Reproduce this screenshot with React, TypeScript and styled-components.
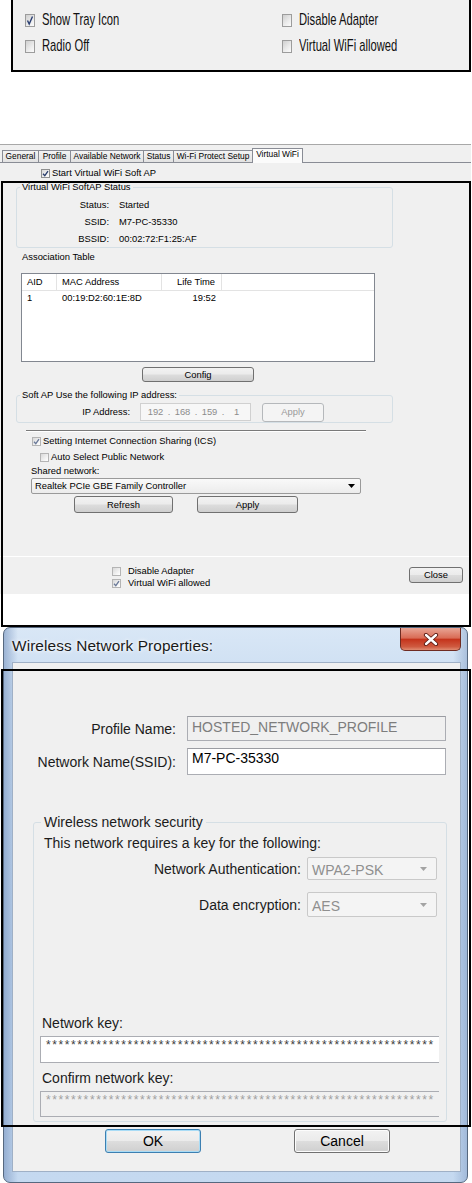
import React from "react";
import styled, { createGlobalStyle } from "styled-components";

const GlobalStyle = createGlobalStyle`
  html, body { margin: 0; padding: 0; background: #ffffff; }
  body { font-family: "Liberation Sans", Arial, sans-serif; color: #000; }
  #root { width: 472px; height: 1183px; overflow: hidden; }
  *, *::before, *::after { box-sizing: border-box; }
`;

const Page = styled.div`
  width: 472px;
  height: 1183px;
  display: flex;
  flex-direction: column;
  background: #fff;
  overflow: hidden;
`;

/* ---------- Section 1 : tray options ---------- */
const TrayPanel = styled.div`
  flex: none;
  margin-left: 11px;
  width: 460px;
  height: 72px;
  border: 2px solid #000;
  border-top: none;
  background: #f0f0f0;
  padding: 7px 0 0 12px;
  display: grid;
  grid-template-columns: 257px 1fr;
  grid-auto-rows: 26px;
`;
const TrayOption = styled.div`
  display: flex;
  align-items: center;
`;
const TrayBox = styled.span`
  flex: none;
  width: 10px;
  height: 13px;
  border: 1px solid #9c9c9c;
  background: linear-gradient(135deg, #cfcfcf 0%, #ececec 60%, #fbfbfb 100%);
  display: flex;
  align-items: center;
  justify-content: center;
`;
const TrayLabel = styled.span`
  margin-left: 7px;
  font-size: 17px;
  line-height: 20px;
  white-space: nowrap;
  color: #111;
  transform: scaleX(0.66);
  transform-origin: left center;
`;

/* ---------- Section 2 : utility dialog ---------- */
const DialogSection = styled.section`
  position: relative;
  flex: none;
  margin-top: 72px;
  height: 483px;
`;
const Dialog = styled.div`
  width: 471px;
  height: 450px;
  display: flex;
  flex-direction: column;
  background: #f0f0f0;
  border-top: 1px solid #a8a8a8;
  font-size: 9.4px;
  line-height: 12px;
`;
const TabStrip = styled.div`
  flex: none;
  height: 17px;
  display: flex;
  align-items: flex-end;
  padding-left: 2px;
`;
const Tab = styled.div<{ $w: number; $active?: boolean; $first?: boolean }>`
  position: relative;
  z-index: ${(p) => (p.$active ? 2 : 1)};
  width: ${(p) => p.$w}px;
  height: ${(p) => (p.$active ? 15 : 12)}px;
  margin-left: ${(p) => (p.$first ? 0 : -1)}px;
  margin-bottom: ${(p) => (p.$active ? -1 : 0)}px;
  border: 1px solid #898c95;
  border-bottom: none;
  background: ${(p) => (p.$active ? "#fbfbfb" : "linear-gradient(#f3f3f3, #e2e2e2)")};
  font-size: 8.4px;
  line-height: 11px;
  text-align: center;
  white-space: nowrap;
`;
const TabPage = styled.div`
  flex: none;
  height: 394px;
  border-top: 1px solid #898c95;
  display: flex;
  flex-direction: column;
`;
const CheckRow = styled.div<{ $left: number; $top: number }>`
  display: flex;
  align-items: center;
  height: 12px;
  margin-top: ${(p) => p.$top}px;
  padding-left: ${(p) => p.$left}px;
  white-space: nowrap;
`;
const SmallBox = styled.span<{ $disabled?: boolean }>`
  flex: none;
  width: 9px;
  height: 9px;
  margin-right: 2px;
  border: 1px solid ${(p) => (p.$disabled ? "#b4b4b4" : "#8e8f8f")};
  background: linear-gradient(135deg, #d9d9d9 0%, #f1f1f1 60%, #ffffff 100%);
  display: flex;
  align-items: center;
  justify-content: center;
`;
const BottomText = styled.span`
  margin-left: 5px;
`;
const GroupBox = styled.fieldset<{ $top: number; $pb: number }>`
  margin: ${(p) => p.$top}px 0 0 16px;
  width: 377px;
  padding: 0 0 ${(p) => p.$pb}px 0;
  border: 1px solid #d5dfe5;
  border-radius: 3px;
  min-width: 0;
`;
const GroupLegend = styled.legend`
  margin-left: 3px;
  padding: 0 2px;
  font-size: 9.4px;
  line-height: 10px;
  white-space: nowrap;
`;
const StatusGrid = styled.div`
  padding-top: 4px;
  display: grid;
  grid-template-columns: 92px 1fr;
  column-gap: 10px;
  grid-auto-rows: 17px;
  align-items: center;
`;
const StatusKey = styled.span`
  text-align: right;
`;
const PlainLabel = styled.div<{ $left: number; $top: number }>`
  margin: ${(p) => p.$top}px 0 0 ${(p) => p.$left}px;
  height: 12px;
  white-space: nowrap;
`;
const AssocTable = styled.div`
  margin: 10px 0 0 21px;
  width: 354px;
  height: 89px;
  border: 1px solid #828790;
  background: #fff;
`;
const TableRow = styled.div<{ $head?: boolean }>`
  display: grid;
  grid-template-columns: 35px 105px 60px;
  height: ${(p) => (p.$head ? 17 : 14)}px;
  align-items: center;
  border-bottom: ${(p) => (p.$head ? "1px solid #e3e3e3" : "none")};
`;
const Cell = styled.span<{ $right?: boolean; $divider?: boolean }>`
  height: 100%;
  display: flex;
  align-items: center;
  justify-content: ${(p) => (p.$right ? "flex-end" : "flex-start")};
  padding: 0 6px 0 5px;
  border-right: ${(p) => (p.$divider ? "1px solid #e3e3e3" : "none")};
  white-space: nowrap;
`;
const ClassicButton = styled.div<{ $w: number; $h: number; $left: number; $top?: number; $right?: number; $disabled?: boolean }>`
  flex: none;
  width: ${(p) => p.$w}px;
  height: ${(p) => p.$h}px;
  margin: ${(p) => p.$top ?? 0}px ${(p) => p.$right ?? 0}px 0 ${(p) => (p.$right !== undefined ? "auto" : `${p.$left}px`)};
  border: 1px solid ${(p) => (p.$disabled ? "#b5b8bb" : "#707070")};
  border-radius: 3px;
  background: ${(p) =>
    p.$disabled
      ? "#f4f4f4"
      : "linear-gradient(#f2f2f2 0%, #ebebeb 49%, #dddddd 51%, #cfcfcf 100%)"};
  color: ${(p) => (p.$disabled ? "#9a9a9a" : "#000")};
  display: flex;
  align-items: center;
  justify-content: center;
  white-space: nowrap;
`;
const IpRow = styled.div`
  margin-top: 3px;
  height: 18px;
  display: flex;
  align-items: center;
`;
const IpLabel = styled.span`
  width: 113px;
  text-align: right;
`;
const IpBox = styled.div`
  margin-left: 10px;
  width: 111px;
  height: 18px;
  border: 1px solid #d0d0d0;
  background: #f7f7f7;
  color: #8c8c8c;
  display: flex;
  align-items: center;
  padding-left: 4px;
`;
const IpPart = styled.span`
  width: 21px;
  text-align: center;
`;
const IpDot = styled.span`
  width: 6px;
  text-align: center;
`;
const Separator = styled.div`
  margin: 7px 0 0 26px;
  width: 340px;
  height: 2px;
  border-top: 1px solid #7a7a7a;
  border-bottom: 1px solid #ffffff;
`;
const DropDown = styled.div`
  margin: 1px 0 0 31px;
  width: 330px;
  height: 16px;
  border: 1px solid #9a9a9a;
  border-radius: 2px;
  background: linear-gradient(#f9f9f9, #ececec);
  display: flex;
  align-items: center;
  padding: 0 5px 0 3px;
`;
const DropText = styled.span`
  flex: 1;
  white-space: nowrap;
`;
const ButtonRow = styled.div`
  margin-top: 2px;
  display: flex;
`;
const BottomBar = styled.div`
  flex: none;
  height: 38px;
  border-top: 1px solid #ffffff;
  display: flex;
  padding-left: 112px;
`;
const BottomChecks = styled.div`
  padding-top: 8px;
  display: flex;
  flex-direction: column;
`;
const Highlight = styled.div<{ $top: number; $height: number }>`
  position: absolute;
  left: 1px;
  width: 470px;
  top: ${(p) => p.$top}px;
  height: ${(p) => p.$height}px;
  border: 2px solid #000;
  pointer-events: none;
`;

/* ---------- Section 3 : Wireless Network Properties ---------- */
const WindowSection = styled.section`
  position: relative;
  flex: none;
`;
const Win = styled.div`
  margin-left: 3px;
  width: 465px;
  height: 556px;
  border: 1px solid #56687f;
  border-radius: 7px;
  background:
    linear-gradient(90deg, rgba(110, 140, 185, 0.55) 0%, rgba(255, 255, 255, 0) 3%, rgba(255, 255, 255, 0) 97%, rgba(110, 140, 185, 0.4) 100%),
    linear-gradient(180deg, #d9e7f6 0%, #c9dcf1 12%, #bcd2ec 60%, #c5d9f0 100%);
  padding: 0 6px 10px 8px;
  display: flex;
  flex-direction: column;
  font-size: 14px;
  line-height: 16px;
  color: #1b1b1b;
`;
const TitleBar = styled.div`
  flex: none;
  height: 34px;
  display: flex;
  align-items: flex-start;
`;
const WinTitle = styled.div`
  margin-top: 9px;
  font-size: 15.4px;
  line-height: 18px;
  letter-spacing: 0.1px;
  color: #1a1a1a;
  text-shadow: 0 0 5px #ffffff, 0 0 3px #ffffff;
  white-space: nowrap;
`;
const CloseButton = styled.div`
  margin-left: auto;
  width: 61px;
  height: 23px;
  border: 1px solid #6f2c22;
  border-top: none;
  border-radius: 0 0 5px 5px;
  background: linear-gradient(#e8a595 0%, #d96c56 45%, #c5341c 52%, #cf5a40 85%, #e08c72 100%);
  display: flex;
  align-items: center;
  justify-content: center;
`;
const Client = styled.div`
  flex: none;
  width: 449px;
  height: 510px;
  border: 1px solid #9fb0c6;
  background: #f0f0f0;
  display: flex;
  flex-direction: column;
`;
const FormRow = styled.div<{ $top: number }>`
  margin-top: ${(p) => p.$top}px;
  display: flex;
  align-items: center;
`;
const FormLabel = styled.span`
  width: 163px;
  text-align: right;
  white-space: nowrap;
`;
const TextInput = styled.div<{ $h: number; $disabled?: boolean; $pt: number }>`
  margin-left: 11px;
  width: 259px;
  height: ${(p) => p.$h}px;
  border: 1px solid #abadb3;
  border-top-color: #9a9ca2;
  background: ${(p) => (p.$disabled ? "#f0f0f0" : "#ffffff")};
  color: ${(p) => (p.$disabled ? "#7d7d7d" : "#000")};
  padding: ${(p) => p.$pt}px 4px 0;
  white-space: nowrap;
`;
const SecurityBox = styled.fieldset`
  margin: 39px 0 0 20px;
  width: 414px;
  padding: 0 0 4px 10px;
  border: 1px solid #d5dfe5;
  border-radius: 3px;
  min-width: 0;
`;
const SecurityLegend = styled.legend`
  margin-left: -3px;
  padding: 0 3px;
  font-size: 14px;
  line-height: 16px;
  white-space: nowrap;
`;
const Para = styled.div<{ $top: number; $left?: number }>`
  margin: ${(p) => p.$top}px 0 0 ${(p) => p.$left ?? 0}px;
  height: 16px;
  white-space: nowrap;
`;
const SelectRow = styled.div<{ $top: number }>`
  margin-top: ${(p) => p.$top}px;
  display: flex;
  align-items: center;
`;
const SelectLabel = styled.span`
  width: 257px;
  text-align: right;
  white-space: nowrap;
`;
const SelectBox = styled.div<{ $h: number }>`
  margin-left: 6px;
  width: 130px;
  height: ${(p) => p.$h}px;
  border: 1px solid #c9c9c9;
  border-radius: 2px;
  background: #f4f4f4;
  color: #8f8f8f;
  display: flex;
  align-items: center;
  padding: 0 9px 0 4px;
`;
const SelectText = styled.span`
  flex: 1;
  padding-top: 2px;
`;
const KeyInput = styled.div<{ $top: number; $h: number; $disabled?: boolean }>`
  margin: ${(p) => p.$top}px 0 0 -4px;
  width: 399px;
  height: ${(p) => p.$h}px;
  border: 1px solid #abadb3;
  border-right: none;
  background: ${(p) => (p.$disabled ? "#f0f0f0" : "#ffffff")};
  color: ${(p) => (p.$disabled ? "#a0a0a0" : "#3d3d3d")};
  padding: 1px 0 0 5px;
  font-size: 12px;
  line-height: 14px;
  letter-spacing: 1.6px;
  white-space: nowrap;
`;
const DialogButtons = styled.div`
  margin-top: 7px;
  display: flex;
`;
const AeroButton = styled.div<{ $left: number; $focused?: boolean }>`
  margin-left: ${(p) => p.$left}px;
  width: 96px;
  height: 24px;
  border: 1px solid ${(p) => (p.$focused ? "#3c7fb1" : "#707070")};
  border-radius: 3px;
  box-shadow: ${(p) => (p.$focused ? "inset 0 0 0 1px #a9dcf6" : "inset 0 0 0 1px #fcfcfc")};
  background: linear-gradient(#f2f2f2 0%, #ebebeb 49%, #dddddd 51%, #cfcfcf 100%);
  display: flex;
  align-items: center;
  justify-content: center;
  color: #000;
`;

const Check = ({ color = "#2b3f6e", w = 7, h = 7 }: { color?: string; w?: number; h?: number }) => (
  <svg width={w} height={h} viewBox="0 0 7 7">
    <path d="M1 3.7 L2.8 5.7 L6 1.1" fill="none" stroke={color} strokeWidth="1.3" />
  </svg>
);

const DownArrow = ({ color = "#000" }: { color?: string }) => (
  <svg width="7" height="4" viewBox="0 0 7 4">
    <path d="M0 0 H7 L3.5 4 Z" fill={color} />
  </svg>
);

const CloseGlyph = () => (
  <svg width="16" height="13" viewBox="0 0 16 13">
    <path d="M3 2 L13 11 M13 2 L3 11" stroke="#5a1a12" strokeWidth="4.2" strokeLinecap="round" />
    <path d="M3 2 L13 11 M13 2 L3 11" stroke="#ffffff" strokeWidth="2.4" strokeLinecap="round" />
  </svg>
);

const stars = (n: number) => "*".repeat(n);

export default function App() {
  return (
    <Page>
      <GlobalStyle />

      <TrayPanel>
        <TrayOption>
          <TrayBox>
            <svg width="8" height="11" viewBox="0 0 8 11">
              <path d="M1.5 5.5 L3.2 9 L6.5 1.5" fill="none" stroke="#2b3f72" strokeWidth="1.4" />
            </svg>
          </TrayBox>
          <TrayLabel>Show Tray Icon</TrayLabel>
        </TrayOption>
        <TrayOption>
          <TrayBox />
          <TrayLabel>Disable Adapter</TrayLabel>
        </TrayOption>
        <TrayOption>
          <TrayBox />
          <TrayLabel>Radio Off</TrayLabel>
        </TrayOption>
        <TrayOption>
          <TrayBox />
          <TrayLabel>Virtual WiFi allowed</TrayLabel>
        </TrayOption>
      </TrayPanel>

      <DialogSection>
        <Dialog>
          <TabStrip>
            <Tab $w={37} $first>General</Tab>
            <Tab $w={33}>Profile</Tab>
            <Tab $w={74}>Available Network</Tab>
            <Tab $w={31}>Status</Tab>
            <Tab $w={80}>Wi-Fi Protect Setup</Tab>
            <Tab $w={51} $active>Virtual WiFi</Tab>
          </TabStrip>
          <TabPage>
            <CheckRow $left={41} $top={4}>
              <SmallBox><Check /></SmallBox>Start Virtual WiFi Soft AP
            </CheckRow>

            <GroupBox $top={3} $pb={0}>
              <GroupLegend>Virtual WiFi SoftAP Status</GroupLegend>
              <StatusGrid>
                <StatusKey>Status:</StatusKey>
                <span>Started</span>
                <StatusKey>SSID:</StatusKey>
                <span>M7-PC-35330</span>
                <StatusKey>BSSID:</StatusKey>
                <span>00:02:72:F1:25:AF</span>
              </StatusGrid>
            </GroupBox>

            <PlainLabel $left={22} $top={3}>Association Table</PlainLabel>
            <AssocTable>
              <TableRow $head>
                <Cell $divider>AID</Cell>
                <Cell $divider>MAC Address</Cell>
                <Cell $divider $right>Life Time</Cell>
              </TableRow>
              <TableRow>
                <Cell>1</Cell>
                <Cell>00:19:D2:60:1E:8D</Cell>
                <Cell $right>19:52</Cell>
              </TableRow>
            </AssocTable>

            <ClassicButton $w={112} $h={15} $left={142} $top={5}>Config</ClassicButton>

            <GroupBox $top={8} $pb={1}>
              <GroupLegend>Soft AP Use the following IP address:</GroupLegend>
              <IpRow>
                <IpLabel>IP Address:</IpLabel>
                <IpBox>
                  <IpPart>192</IpPart>
                  <IpDot>.</IpDot>
                  <IpPart>168</IpPart>
                  <IpDot>.</IpDot>
                  <IpPart>159</IpPart>
                  <IpDot>.</IpDot>
                  <IpPart>1</IpPart>
                </IpBox>
                <ClassicButton $w={62} $h={19} $left={11} $disabled>Apply</ClassicButton>
              </IpRow>
            </GroupBox>

            <Separator />

            <CheckRow $left={32} $top={3}>
              <SmallBox $disabled><Check color="#6b7a99" /></SmallBox>Setting Internet Connection Sharing (ICS)
            </CheckRow>
            <CheckRow $left={40} $top={4}>
              <SmallBox $disabled />Auto Select Public Network
            </CheckRow>
            <PlainLabel $left={31} $top={2}>Shared network:</PlainLabel>
            <DropDown>
              <DropText>Realtek PCIe GBE Family Controller</DropText>
              <DownArrow />
            </DropDown>
            <ButtonRow>
              <ClassicButton $w={99} $h={17} $left={74}>Refresh</ClassicButton>
              <ClassicButton $w={101} $h={17} $left={24}>Apply</ClassicButton>
            </ButtonRow>
          </TabPage>
          <BottomBar>
            <BottomChecks>
              <CheckRow $left={0} $top={0}>
                <SmallBox $disabled />
                <BottomText>Disable Adapter</BottomText>
              </CheckRow>
              <CheckRow $left={0} $top={0}>
                <SmallBox $disabled><Check color="#6b7a99" /></SmallBox>
                <BottomText>Virtual WiFi allowed</BottomText>
              </CheckRow>
            </BottomChecks>
            <ClassicButton $w={54} $h={16} $left={0} $top={10} $right={8}>
              Close
            </ClassicButton>
          </BottomBar>
        </Dialog>
        <Highlight $top={37} $height={446} />
      </DialogSection>

      <WindowSection>
        <Win>
          <TitleBar>
            <WinTitle>Wireless Network Properties:</WinTitle>
            <CloseButton>
              <CloseGlyph />
            </CloseButton>
          </TitleBar>
          <Client>
            <FormRow $top={53}>
              <FormLabel>Profile Name:</FormLabel>
              <TextInput $h={25} $pt={2} $disabled>HOSTED_NETWORK_PROFILE</TextInput>
            </FormRow>
            <FormRow $top={7}>
              <FormLabel>Network Name(SSID):</FormLabel>
              <TextInput $h={27} $pt={1}>M7-PC-35330</TextInput>
            </FormRow>

            <SecurityBox>
              <SecurityLegend>Wireless network security</SecurityLegend>
              <Para $top={5}>This network requires a key for the following:</Para>
              <SelectRow $top={6}>
                <SelectLabel>Network Authentication:</SelectLabel>
                <SelectBox $h={23}>
                  <SelectText>WPA2-PSK</SelectText>
                  <DownArrow color="#a3a3a3" />
                </SelectBox>
              </SelectRow>
              <SelectRow $top={12}>
                <SelectLabel>Data encryption:</SelectLabel>
                <SelectBox $h={25}>
                  <SelectText>AES</SelectText>
                  <DownArrow color="#a3a3a3" />
                </SelectBox>
              </SelectRow>
              <Para $top={98} $left={-2}>Network key:</Para>
              <KeyInput $top={5} $h={27}>{stars(62)}</KeyInput>
              <Para $top={7} $left={-2}>Confirm network key:</Para>
              <KeyInput $top={5} $h={26} $disabled>{stars(62)}</KeyInput>
            </SecurityBox>

            <DialogButtons>
              <AeroButton $left={92} $focused>OK</AeroButton>
              <AeroButton $left={93}>Cancel</AeroButton>
            </DialogButtons>
          </Client>
        </Win>
        <Highlight $top={42} $height={458} />
      </WindowSection>
    </Page>
  );
}
